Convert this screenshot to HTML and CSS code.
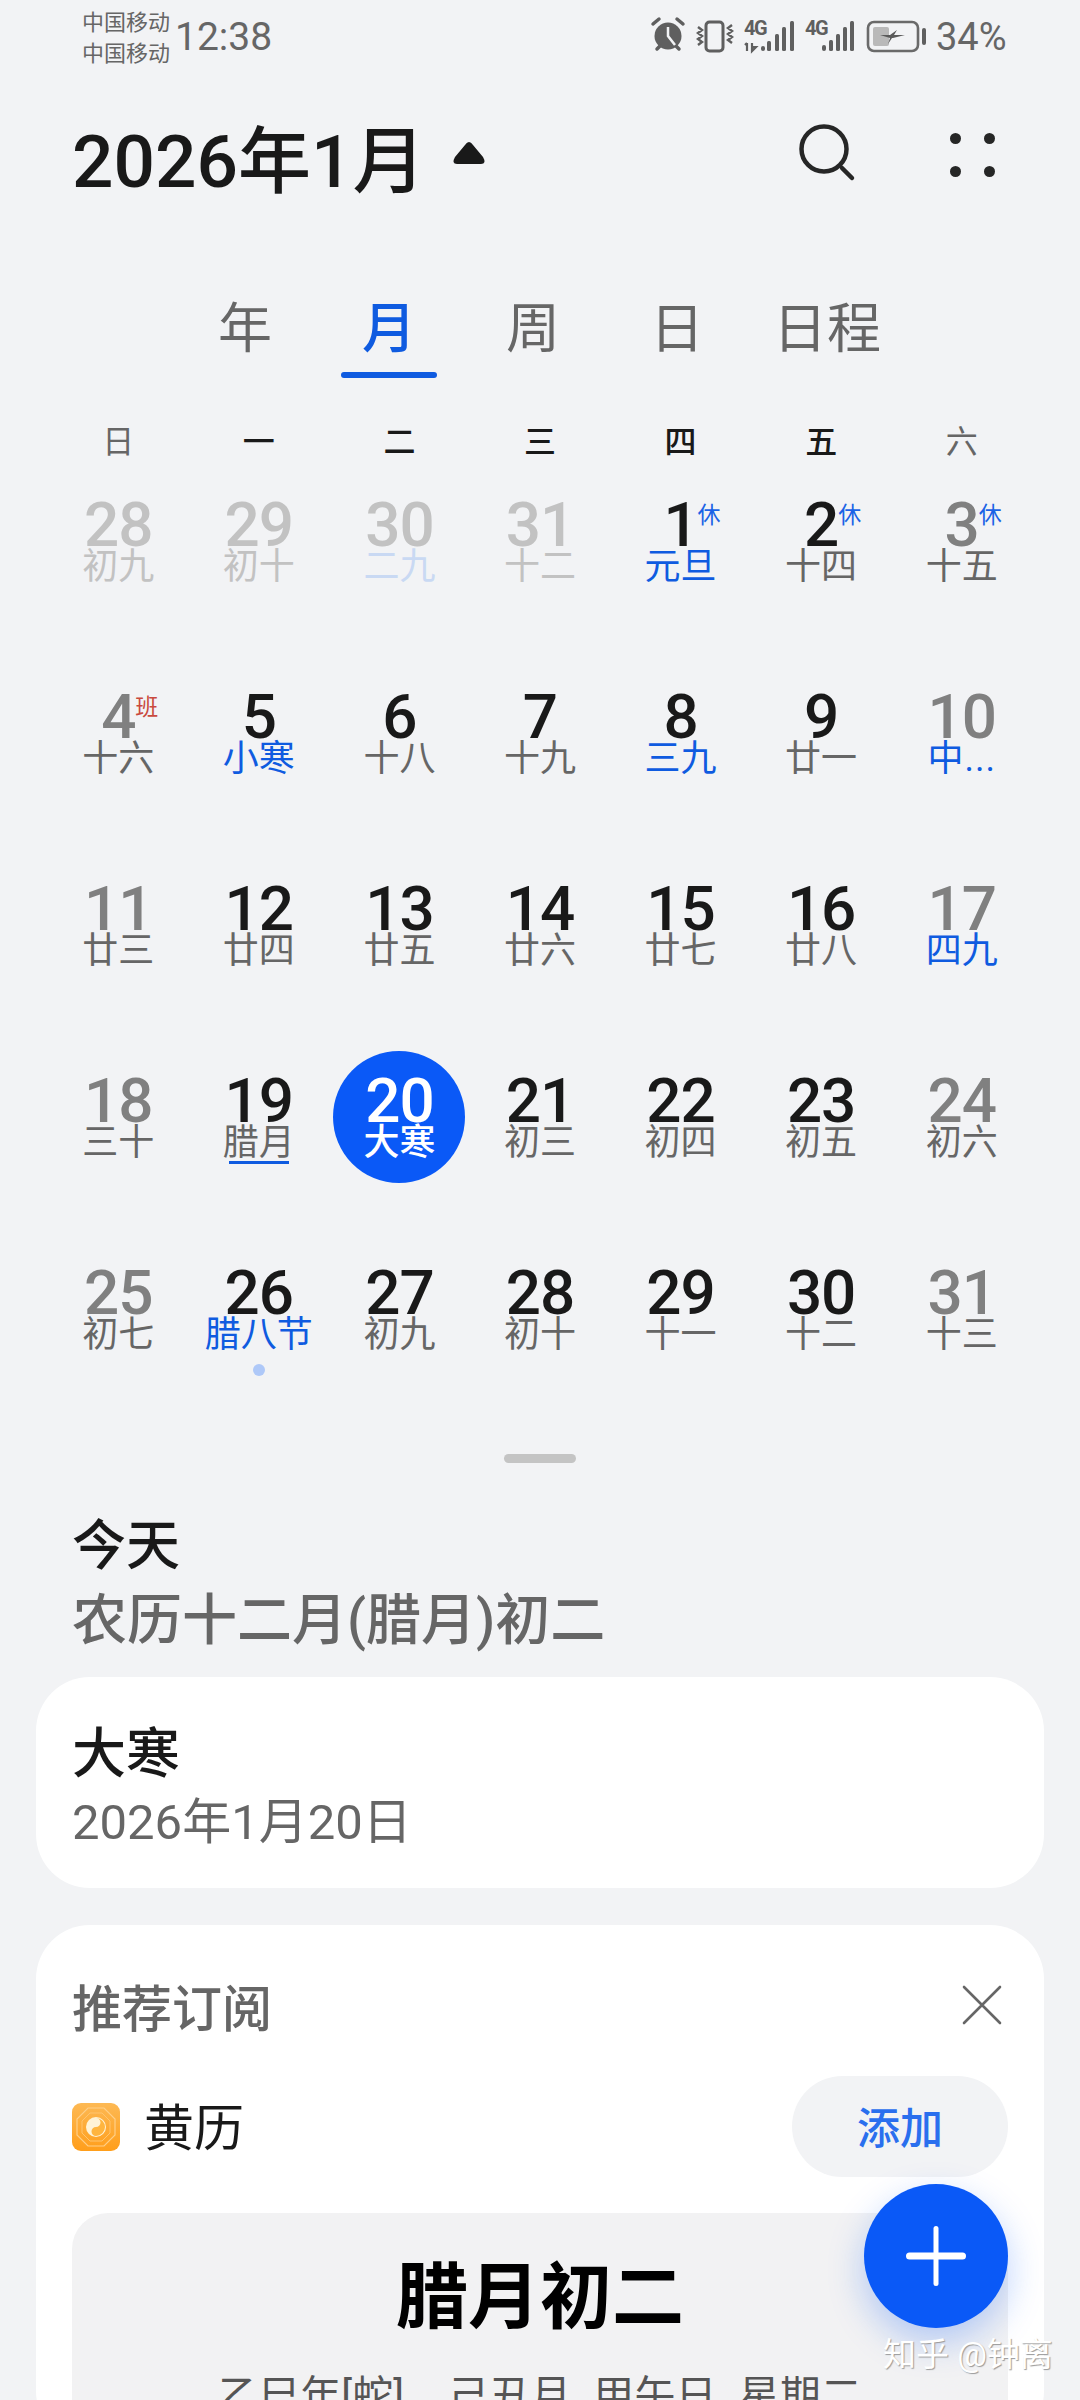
FILE: index.html
```html
<!DOCTYPE html>
<html lang="zh-CN">
<head>
  <meta charset="UTF-8" />
  <meta name="viewport" content="width=device-width, initial-scale=1.0"/>
  <title>日历</title>
  <link rel="stylesheet" href="styles.css">
</head>
<body>

  <div class="statusbar">
    <div class="carrier">中国移动<br>中国移动</div>
    <div class="clock">12:38</div>
    <svg class="status-icons" width="280" height="50" viewBox="650 10 280 50">
      <!-- alarm -->
      <circle cx="668" cy="36" r="13.5" fill="#5f5f5f"/>
      <path d="M653 24l6-5M683 24l-6-5M657 49l3-3M679 49l-3-3" stroke="#5f5f5f" stroke-width="3.5" stroke-linecap="round" fill="none"/>
      <path d="M668 27v9l7 9" stroke="#f2f3f5" stroke-width="2.5" fill="none"/>
      <!-- vibrate -->
      <rect x="706" y="22" width="17" height="29" rx="3.5" fill="none" stroke="#5f5f5f" stroke-width="3"/>
      <path d="M698 27l4 3-4 3 4 3-4 3 4 3-4 3M732 25l-4 3 4 3-4 3 4 3-4 3 4 3" fill="none" stroke="#5f5f5f" stroke-width="2.4"/>
      <!-- sim 1 -->
      <text class="net" x="744" y="35">4G</text>
      <path d="M747 43v8M745 45l2-2M752 43v8l4-4h-4" fill="none" stroke="#5f5f5f" stroke-width="2.2"/>
      <g fill="#5f5f5f">
        <rect x="761" y="46" width="4" height="5" rx="2"/>
        <rect x="767" y="41" width="4" height="10" rx="1.5"/>
        <rect x="775" y="34" width="4" height="17" rx="1.5"/>
        <rect x="782" y="27" width="4" height="24" rx="1.5"/>
        <rect x="790" y="21" width="4" height="30" rx="1.5"/>
      </g>
      <!-- sim 2 -->
      <text class="net" x="805" y="35">4G</text>
      <g fill="#5f5f5f">
        <rect x="822" y="45" width="4" height="6" rx="2"/>
        <rect x="829" y="40" width="4" height="11" rx="1.5"/>
        <rect x="836" y="34" width="4" height="17" rx="1.5"/>
        <rect x="843" y="27" width="4" height="24" rx="1.5"/>
        <rect x="850" y="21" width="4" height="30" rx="1.5"/>
      </g>
      <!-- battery -->
      <rect x="868" y="22" width="50" height="29" rx="6" fill="none" stroke="#6a6a6a" stroke-width="2.6"/>
      <rect x="873" y="27" width="16" height="19" rx="2" fill="#b9b9b9"/>
      <path d="M880 35h10l7-5-3 5h11l-12 3h-1l-4 6 2-6z" fill="#5a5a5a"/>
      <rect x="922" y="28" width="4" height="17" rx="2" fill="#5f5f5f"/>
    </svg>
    <div class="battery-pct">34%</div>
  </div>

  <div class="topbar">
    <div class="title">2026年1月</div>
    <svg class="caret" width="36" height="26" viewBox="0 0 36 26"><path d="M18 2Q20 2 22 5L32 17Q36 24 30 24H6Q0 24 4 17L14 5Q16 2 18 2Z" fill="#191919"/></svg>
    <svg class="search" width="64" height="64" viewBox="0 0 64 64">
      <circle cx="29" cy="29" r="22.5" fill="none" stroke="#262626" stroke-width="4.5"/>
      <path d="M47 48L57 58" stroke="#262626" stroke-width="4.5" stroke-linecap="round"/>
    </svg>
    <div class="more"><i></i><i></i><i></i><i></i></div>
  </div>

  <div class="tabs">
    <div class="tab">年</div>
    <div class="tab active">月</div>
    <div class="tab">周</div>
    <div class="tab">日</div>
    <div class="tab wide">日程</div>
  </div>

  <div class="weekdays">
    <div class="rest">日</div><div>一</div><div>二</div><div>三</div><div>四</div><div>五</div><div class="rest">六</div>
  </div>

  <div class="month">
    <div class="day faded"><b>28</b><span>初九</span></div>
    <div class="day faded"><b>29</b><span>初十</span></div>
    <div class="day faded"><b>30</b><span class="fest-faded">二九</span></div>
    <div class="day faded"><b>31</b><span>十二</span></div>
    <div class="day"><b>1</b><span class="fest">元旦</span><em>休</em></div>
    <div class="day"><b>2</b><span>十四</span><em>休</em></div>
    <div class="day wkend"><b>3</b><span>十五</span><em>休</em></div>

    <div class="day wkend"><b>4</b><span>十六</span><em class="work">班</em></div>
    <div class="day"><b>5</b><span class="fest">小寒</span></div>
    <div class="day"><b>6</b><span>十八</span></div>
    <div class="day"><b>7</b><span>十九</span></div>
    <div class="day"><b>8</b><span class="fest">三九</span></div>
    <div class="day"><b>9</b><span>廿一</span></div>
    <div class="day wkend"><b>10</b><span class="fest cut">中...</span></div>

    <div class="day wkend"><b>11</b><span>廿三</span></div>
    <div class="day"><b>12</b><span>廿四</span></div>
    <div class="day"><b>13</b><span>廿五</span></div>
    <div class="day"><b>14</b><span>廿六</span></div>
    <div class="day"><b>15</b><span>廿七</span></div>
    <div class="day"><b>16</b><span>廿八</span></div>
    <div class="day wkend"><b>17</b><span class="fest">四九</span></div>

    <div class="day wkend"><b>18</b><span>三十</span></div>
    <div class="day"><b>19</b><span class="line">腊月</span></div>
    <div class="day today"><b>20</b><span>大寒</span></div>
    <div class="day"><b>21</b><span>初三</span></div>
    <div class="day"><b>22</b><span>初四</span></div>
    <div class="day"><b>23</b><span>初五</span></div>
    <div class="day wkend"><b>24</b><span>初六</span></div>

    <div class="day wkend"><b>25</b><span>初七</span></div>
    <div class="day event"><b>26</b><span class="fest">腊八节</span></div>
    <div class="day"><b>27</b><span>初九</span></div>
    <div class="day"><b>28</b><span>初十</span></div>
    <div class="day"><b>29</b><span>十一</span></div>
    <div class="day"><b>30</b><span>十二</span></div>
    <div class="day wkend"><b>31</b><span>十三</span></div>
  </div>

  <div class="handle"></div>

  <div class="today-info">
    <div class="today-label">今天</div>
    <div class="today-lunar">农历十二月(腊月)初二</div>
  </div>

  <div class="card term">
    <div class="term-name">大寒</div>
    <div class="term-date">2026年1月20日</div>
  </div>

  <div class="card sub">
    <div class="sub-head">
      <div class="sub-title">推荐订阅</div>
      <svg class="close" width="40" height="40" viewBox="0 0 40 40"><path d="M2 2L38 38M38 2L2 38" stroke="#666" stroke-width="2.6" stroke-linecap="round"/></svg>
    </div>
    <div class="sub-row">
      <svg class="almanac" width="48" height="48" viewBox="0 0 48 48">
        <defs><linearGradient id="org" x1="0" y1="0" x2="0" y2="1"><stop offset="0" stop-color="#fdb954"/><stop offset="1" stop-color="#ff9e1b"/></linearGradient></defs>
        <rect width="48" height="48" rx="9" fill="url(#org)"/>
        <path d="M16 5h16l11 11v16L32 43H16L5 32V16z" fill="none" stroke="#ffcf87" stroke-width="1.2"/>
        <path d="M18 10h12l8 8v12l-8 8H18l-8-8V18z" fill="none" stroke="#ffc46e" stroke-width="1"/>
        <circle cx="24" cy="24" r="10" fill="#fff3d6"/>
        <path d="M24 15a9 9 0 0 1 0 18a4.500 4.500 0 0 1 0-9a4.500 4.500 0 0 0 0-9z" fill="#ffb53f"/>
        <circle cx="24" cy="19.500" r="1.600" fill="#fff3d6"/>
        <circle cx="24" cy="28.500" r="1.600" fill="#ffb53f"/>
      </svg>
      <div class="sub-name">黄历</div>
      <div class="add-btn">添加</div>
    </div>
    <div class="panel">
      <div class="panel-big">腊月初二</div>
      <div class="panel-small">乙巳年[蛇] &nbsp;己丑月 甲午日 星期二</div>
    </div>
  </div>

  <div class="fab"><svg width="60" height="60" viewBox="0 0 60 60"><path d="M3.500 30H56.500" stroke="#fff" stroke-width="7" stroke-linecap="round"/><path d="M30 2.500V57.500" stroke="#fff" stroke-width="5" stroke-linecap="round"/></svg></div>
  <div class="watermark">知乎 @钟离</div>

</body>
</html>
```
FILE: styles.css
```css
* {
  box-sizing: border-box;
}

html, body {
  margin: 0;
  height: 2400px;
  overflow: hidden;
}

body {
  position: relative;
  font-family: 'Roboto', 'Noto Sans CJK SC', sans-serif;
  background-color: #f2f3f5;
  color: #191919;
}

/* status bar */
.statusbar {
  display: flex;
  align-items: flex-start;
  height: 70px;
  padding: 0 69px 0 82px;
  color: #666;
}

.carrier {
  width: 93px;
  margin-top: 7px;
  font-size: 22px;
  line-height: 31px;
}

.clock {
  margin-top: 14px;
  font-size: 39px;
  line-height: 46px;
}

.status-icons {
  margin: 10px 0 0 auto;
}

.net {
  font-family: 'Roboto', sans-serif;
  font-size: 20px;
  font-weight: 700;
  fill: #5f5f5f;
  letter-spacing: -1.5px;
}

.battery-pct {
  width: 75px;
  margin: 14px 0 0 6px;
  font-size: 38px;
  line-height: 46px;
}

/* title row */
.topbar {
  display: flex;
  align-items: center;
  height: 96px;
  margin-top: 40px;
  padding-left: 72px;
}

.title {
  padding-top: 8px;
  font-size: 73px;
  font-weight: 500;
  line-height: 96px;
}

.caret {
  margin: 0 0 10px 26px;
}

.search {
  margin: 0 0 12px auto;
  transform: translateX(6px);
}

.more {
  display: grid;
  grid-template-columns: 11px 11px;
  gap: 22px 23px;
  margin: -7px 85px 0 97px;
}

.more i {
  display: block;
  width: 11px;
  height: 11px;
  border-radius: 50%;
  background-color: #262626;
}

/* view switcher */
.tabs {
  display: flex;
  gap: 48px;
  margin-top: 88px;
  padding-left: 197px;
  color: #666;
}

.tab {
  width: 96px;
  height: 87px;
  font-size: 54px;
  line-height: 72px;
  text-align: center;
}

.tab.wide {
  width: 114px;
  margin-left: -3px;
}

.tab.active {
  color: #0f5be0;
  font-weight: 500;
}

.tab.active::after {
  content: "";
  display: block;
  height: 6px;
  margin-top: 6px;
  border-radius: 3px;
  background-color: #0f5be0;
}

/* calendar */
.weekdays {
  display: grid;
  grid-template-columns: repeat(7, 1fr);
  margin-top: 41px;
  padding: 0 48px;
  font-size: 32px;
  line-height: 40px;
  text-align: center;
  font-weight: 500;
}

.weekdays .rest {
  color: #666;
  font-weight: 400;
}

.month {
  display: grid;
  grid-template-columns: repeat(7, 1fr);
  grid-auto-rows: 192px;
  margin-top: 13px;
  padding: 0 48px;
}

.day {
  position: relative;
  display: flex;
  flex-direction: column;
  align-items: center;
  justify-self: center;
  width: 132px;
  height: 132px;
  padding-top: 25px;
  border-radius: 50%;
  color: #666;
}

.day b {
  color: #191919;
  font-size: 62px;
  font-weight: 500;
  line-height: 49px;
  letter-spacing: -1px;
}

.day span {
  position: relative;
  font-size: 36px;
  line-height: 36px;
  white-space: nowrap;
}

.day em {
  position: absolute;
  top: 29px;
  left: 83px;
  color: #1b63e6;
  font-size: 23px;
  font-style: normal;
  line-height: 24px;
}

.day em.work {
  color: #c9493d;
}

.day.wkend b {
  color: #808080;
}

.day.faded b,
.day.faded span {
  color: #c2c2c2;
}

.day .fest {
  color: #0f5be0;
}

.day .cut {
  letter-spacing: 1px;
}

.day .fest-faded,
.day.faded .fest-faded {
  color: #c9d9f3;
}

.day .line::after {
  content: "";
  position: absolute;
  left: 6px;
  right: 6px;
  bottom: -3px;
  height: 3px;
  background-color: #0f5be0;
}

.day.today {
  background-color: #0a59f7;
}

.day.today b,
.day.today span {
  color: #fff;
  font-weight: 500;
}

.day.event::after {
  content: "";
  position: absolute;
  top: 121px;
  width: 12px;
  height: 12px;
  border-radius: 50%;
  background-color: #aec8f8;
}

.handle {
  width: 72px;
  height: 9px;
  margin: 19px auto 0;
  border-radius: 5px;
  background-color: #c4c4c4;
}

/* today summary */
.today-info {
  margin-top: 48px;
  padding-left: 72px;
  font-size: 54px;
  font-weight: 500;
  line-height: 72px;
}

.today-lunar {
  margin-top: 1px;
  color: #666;
  font-size: 55px;
}

.card {
  margin: 0 36px;
  border-radius: 54px;
  background-color: #fff;
}

.term {
  height: 211px;
  margin-top: 21px;
  padding: 45px 36px 0;
}

.term-name {
  font-size: 54px;
  font-weight: 500;
  line-height: 66px;
}

.term-date {
  margin-top: 2px;
  color: #666;
  font-size: 49px;
  line-height: 66px;
}

.sub {
  height: 520px;
  margin-top: 37px;
  padding: 47px 36px 0;
}

.sub-head {
  display: flex;
  align-items: center;
  justify-content: space-between;
  height: 66px;
}

.sub-title {
  color: #666;
  font-size: 50px;
  font-weight: 500;
}

.close {
  margin: 0 6px 0 0;
}

.sub-row {
  display: flex;
  align-items: center;
  margin-top: 38px;
}

.sub-name {
  margin: -6px 0 0 24px;
  font-size: 50px;
}

.add-btn {
  width: 216px;
  height: 101px;
  margin-left: auto;
  border-radius: 51px;
  background-color: #f2f3f5;
  color: #2a6fee;
  font-size: 43px;
  font-weight: 500;
  line-height: 107px;
  text-align: center;
}

.panel {
  height: 300px;
  margin-top: 36px;
  padding-top: 39px;
  border-radius: 36px;
  background-color: #f2f2f3;
  text-align: center;
}

.panel-big {
  color: #000;
  font-size: 72px;
  font-weight: 700;
  line-height: 92px;
}

.panel-small {
  margin-top: 22px;
  color: #555;
  font-size: 41px;
  line-height: 60px;
  word-spacing: 12px;
}

/* floating bits */
.fab {
  position: absolute;
  top: 2184px;
  left: 864px;
  display: flex;
  align-items: center;
  justify-content: center;
  width: 144px;
  height: 144px;
  border-radius: 50%;
  background-color: #0a59f7;
  box-shadow: 0 14px 36px rgba(10, 89, 247, 0.28);
}

.watermark {
  position: absolute;
  top: 2334px;
  left: 883px;
  color: #fff;
  font-size: 33px;
  line-height: 42px;
  white-space: nowrap;
  text-shadow: 1px 1px 1px #9a9a9a;
}
```
